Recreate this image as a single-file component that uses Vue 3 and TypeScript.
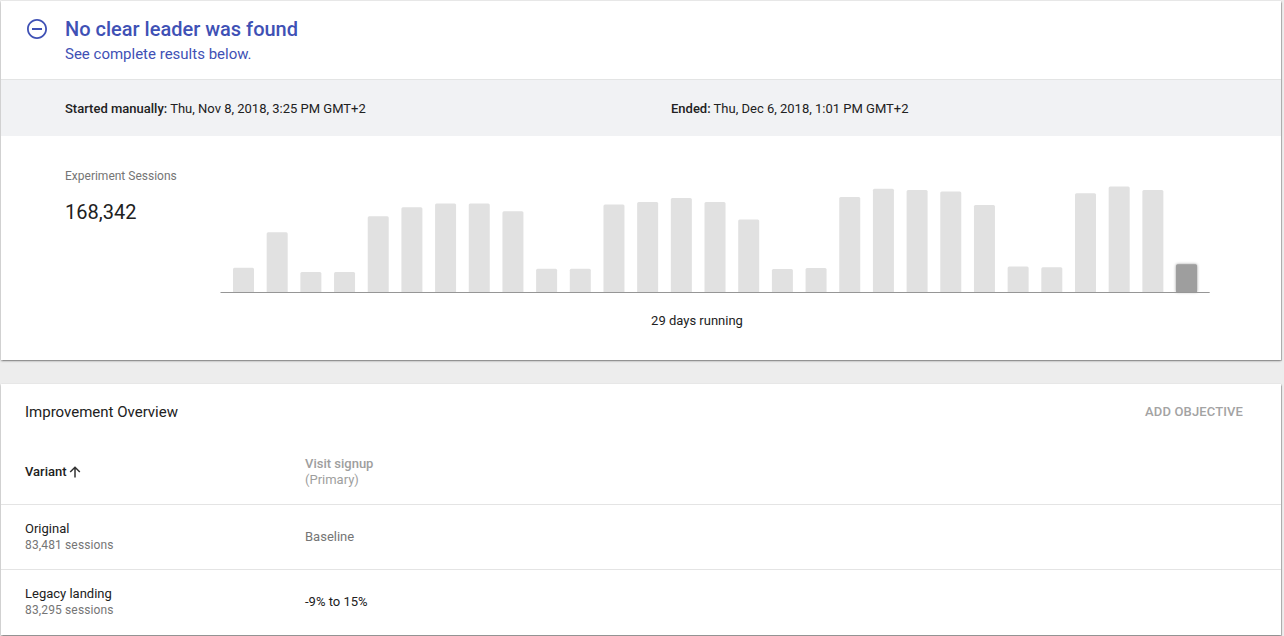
<script setup lang="ts">
interface Variant {
  name: string
  sessions: string
  result: string
  baseline: boolean
}

const variants: Variant[] = [
  { name: 'Original', sessions: '83,481 sessions', result: 'Baseline', baseline: true },
  { name: 'Legacy landing', sessions: '83,295 sessions', result: '-9% to 15%', baseline: false },
]

const heights: number[] = [
  24.2, 59.8, 20, 20, 75.8, 84.8, 88.4, 88.4, 80.7, 23.2, 23.2, 87.4, 90, 94, 90, 72.5, 23,
  24, 95, 103.3, 102, 100.6, 87, 25.6, 24.8, 98.7, 105.6, 102, 27.8,
]
const baseY = 112
const pitch = 33.68
const barWidth = 21

const bars = heights.map((h, i) => {
  const x = 13 + i * pitch
  const y = baseY - h
  return {
    last: i === heights.length - 1,
    d: `M${x} ${baseY}V${y + 1.5}q0 -1.5 1.5 -1.5H${x + barWidth - 1.5}q1.5 0 1.5 1.5V${baseY}Z`,
  }
})
</script>

<template>
  <main class="page">
    <section class="card">
      <header class="headline">
        <svg class="status" width="24" height="24" viewBox="0 0 24 24">
          <path d="M7 11v2h10v-2H7zm5-9C6.48 2 2 6.48 2 12s4.48 10 10 10 10-4.48 10-10S17.52 2 12 2zm0 18.2c-4.52 0-8.2-3.68-8.2-8.2s3.68-8.2 8.2-8.2 8.2 3.68 8.2 8.2-3.68 8.2-8.2 8.2z" />
        </svg>
        <div>
          <h1>No clear leader was found</h1>
          <p>See complete results below.</p>
        </div>
      </header>
      <div class="dates">
        <div class="started"><b>Started manually:</b> Thu, Nov 8, 2018, 3:25 PM GMT+2</div>
        <div class="ended"><b>Ended:</b> Thu, Dec 6, 2018, 1:01 PM GMT+2</div>
      </div>
      <div class="sessions">
        <div class="total">
          <div class="total-label">Experiment Sessions</div>
          <div class="total-value">168,342</div>
        </div>
        <figure>
          <svg class="chart" width="990" height="114" viewBox="0 0 990 114">
            <path v-for="(bar, i) in bars" :key="i" :d="bar.d" :class="bar.last ? 'bar current' : 'bar'" />
            <path class="axis" d="M0.5 112.5H989.7" />
          </svg>
          <figcaption>29 days running</figcaption>
        </figure>
      </div>
    </section>

    <section class="card overview">
      <header class="overview-head">
        <h2>Improvement Overview</h2>
        <button type="button">ADD OBJECTIVE</button>
      </header>
      <div class="row columns">
        <div class="variant-col">
          <span>Variant</span>
          <svg width="12" height="12" viewBox="0 0 12 12"><path d="M6 11.4V1.4M1.2 6L6 1.2L10.8 6" /></svg>
        </div>
        <div class="goal"><b>Visit signup</b><br />(Primary)</div>
      </div>
      <div v-for="v in variants" :key="v.name" class="row">
        <div class="variant">
          <div class="name">{{ v.name }}</div>
          <div class="count">{{ v.sessions }}</div>
        </div>
        <div :class="['result', { baseline: v.baseline }]">{{ v.result }}</div>
      </div>
    </section>
  </main>
</template>

<style>
body {
  margin: 0;
  overflow: hidden;
}
</style>

<style scoped>
.page {
  box-sizing: border-box;
  height: 636px;
  padding: 1px 3px 0 1px;
  overflow: hidden;
  background: #ededed;
  color: #212121;
  font-family: Roboto, sans-serif;
  font-size: 13px;
  line-height: 16px;
}
.card {
  height: 359px;
  background: #fff;
  box-shadow: 0 1px 2px rgba(0, 0, 0, 0.37), 0 0 1px 0.5px rgba(0, 0, 0, 0.17);
}
.overview {
  height: 251px;
  margin-top: 24px;
}
h1, h2, p, figure {
  margin: 0;
}
b {
  font-weight: 500;
}
.headline {
  display: flex;
  gap: 16px;
  box-sizing: border-box;
  height: 79px;
  padding: 16px 24px 0;
  border-bottom: 1px solid #e3e4e4;
  color: #3f51b5;
}
.status {
  fill: #3f51b5;
}
h1 {
  font-size: 20px;
  font-weight: 500;
  line-height: 24px;
}
p {
  margin-top: 3px;
  font-size: 15px;
  line-height: 20px;
}
.dates {
  display: flex;
  align-items: center;
  box-sizing: border-box;
  height: 56px;
  padding: 2px 0 0 64px;
  background: #f1f2f4;
}
.started {
  width: 606px;
}
.sessions {
  display: flex;
}
.total {
  width: 155px;
  padding: 32px 0 0 64px;
}
.total-label {
  color: #757575;
  font-size: 12px;
}
.total-value {
  margin-top: 16px;
  font-size: 20px;
  line-height: 24px;
}
figure {
  width: 990px;
  padding-top: 44px;
}
.chart {
  display: block;
  overflow: visible;
}
.bar {
  fill: #e1e1e1;
}
.current {
  fill: #9e9e9e;
  filter: drop-shadow(0 0 1.5px rgba(0, 0, 0, 0.4));
}
.axis {
  stroke: #969696;
}
figcaption {
  margin-top: 19px;
  padding-right: 36px;
  text-align: center;
}
.overview-head {
  display: flex;
  justify-content: space-between;
  align-items: center;
  height: 56px;
  padding: 0 38px 0 24px;
}
h2 {
  font-size: 15px;
  font-weight: 400;
}
button {
  padding: 0;
  border: 0;
  background: none;
  color: #a3a3a3;
  font: 500 13px/16px Roboto, sans-serif;
  letter-spacing: 0.13px;
}
.row {
  display: flex;
  align-items: center;
  box-sizing: border-box;
  height: 65px;
  padding-left: 24px;
  border-top: 1px solid #e4e4e4;
}
.columns {
  height: 64px;
  border-top: 0;
}
.variant-col {
  display: flex;
  align-items: center;
  gap: 2px;
  width: 280px;
  font-weight: 500;
}
.variant-col svg {
  fill: none;
  stroke: #333;
  stroke-width: 1.5;
}
.variant {
  width: 280px;
}
.goal {
  color: #9e9e9e;
}
.count {
  color: #757575;
  font-size: 12px;
  letter-spacing: 0.14px;
}
.baseline {
  color: #757575;
}
</style>
